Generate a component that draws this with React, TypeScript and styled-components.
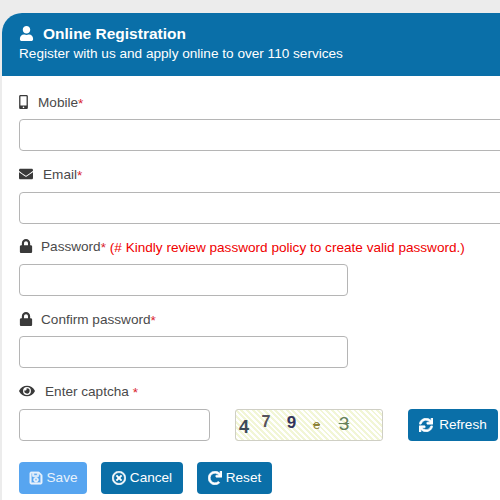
import styled, { createGlobalStyle } from 'styled-components';
import { ReactNode } from 'react';
import {
  FaUser,
  FaMobileAlt,
  FaEnvelope,
  FaLock,
  FaEye,
  FaRegSave,
  FaRegTimesCircle,
  FaRedo,
  FaSync,
} from 'react-icons/fa';

const GlobalStyle = createGlobalStyle`
  html, body {
    margin: 0;
    height: 500px;
    overflow: hidden;
    background: #ececec;
    font-family: "Liberation Sans", Arial, sans-serif;
  }
`;

const Page = styled.div`
  width: 500px;
  height: 500px;
  overflow: hidden;
  padding: 13px 0 0 2px;
  box-sizing: border-box;
`;
const Card = styled.div`
  width: 620px;
  height: 487px;
  background: #fff;
  border-radius: 20px 0 0 0;
  overflow: hidden;
`;
const Header = styled.div`
  background: #0a6fa8;
  color: #fff;
  height: 63px;
  box-sizing: border-box;
  padding: 11px 0 0 17px;
`;
const Title = styled.div`
  display: flex;
  align-items: center;
  gap: 9px;
  font-size: 15.5px;
  font-weight: 700;
  line-height: 19px;
  svg {
    width: 15px;
    height: 15px;
  }
`;
const Subtitle = styled.div`
  font-size: 13.6px;
  line-height: 19px;
  margin-top: 1px;
`;
const Form = styled.div`
  padding: 15.2px 0 0 17px;
`;
const Field = styled.div`
  margin-bottom: 12.4px;
`;
const Label = styled.div<{ $gap: number; $iconWidth: number }>`
  display: flex;
  align-items: center;
  gap: ${(p) => p.$gap}px;
  height: 20px;
  margin-bottom: 8px;
  font-size: 13.6px;
  color: #4a4a4a;
  span {
    position: relative;
    top: 1px;
  }
  svg {
    flex: none;
    color: #3a3a3a;
    width: ${(p) => p.$iconWidth}px;
    height: 14px;
    margin-top: 1px;
  }
`;
const Star = styled.span`
  color: #d9232e;
`;
const Note = styled.span`
  color: #f00000;
`;
const Input = styled.input<{ $width: number }>`
  display: block;
  width: ${(p) => p.$width}px;
  height: 32px;
  box-sizing: border-box;
  border: 1px solid #b5b5b5;
  border-radius: 4px;
  background: #fff;
  outline: none;
`;
const CaptchaRow = styled.div`
  display: flex;
  align-items: center;
`;
const CaptchaImage = styled.div`
  width: 148px;
  height: 32px;
  margin-left: 25px;
  box-sizing: border-box;
  border: 1px solid #cfcfc4;
  border-radius: 3px;
  padding-left: 1px;
  display: flex;
  align-items: center;
  background: repeating-linear-gradient(
    45deg,
    #f2f6d6,
    #f2f6d6 2px,
    #ffffff 2px,
    #ffffff 4px
  );
`;
const CaptchaChar = styled.span<{ $color: string; $width: number; $y: number; $size: number; $struck?: boolean }>`
  display: inline-block;
  width: ${(p) => p.$width}px;
  text-align: center;
  font-family: "Liberation Sans", sans-serif;
  font-size: ${(p) => p.$size}px;
  font-weight: ${(p) => (p.$struck ? 400 : 700)};
  text-decoration: ${(p) => (p.$struck ? 'line-through' : 'none')};
  color: ${(p) => p.$color};
  transform: translateY(${(p) => p.$y}px);
`;
const Button = styled.button<{ $light?: boolean; $width: number; $gap: number }>`
  display: inline-flex;
  align-items: center;
  justify-content: center;
  gap: ${(p) => p.$gap}px;
  width: ${(p) => p.$width}px;
  height: 32px;
  padding: 0;
  border: 0;
  border-radius: 4px;
  background: ${(p) => (p.$light ? '#57a5f0' : '#0a6fa8')};
  color: ${(p) => (p.$light ? '#e8f2fc' : '#fff')};
  font-family: inherit;
  font-size: 13.6px;
  svg {
    width: 14px;
    height: 14px;
    stroke: currentColor;
    stroke-width: 24;
  }
`;
const RefreshButton = styled(Button)`
  margin-left: 25px;
`;
const Actions = styled.div`
  display: flex;
  gap: 14px;
  margin-top: 21px;
`;

interface RowProps {
  icon: ReactNode;
  gap: number;
  iconWidth?: number;
  label: string;
  width: number;
  note?: string;
}

const Row = ({ icon, gap, iconWidth = 14, label, width, note }: RowProps) => (
  <Field>
    <Label $gap={gap} $iconWidth={iconWidth}>
      {icon}
      <span>
        {label}
        <Star>*</Star>
        {note && <Note> {note}</Note>}
      </span>
    </Label>
    <Input $width={width} />
  </Field>
);

const App = () => {
  return (
    <Page>
      <GlobalStyle />
      <Card>
        <Header>
          <Title>
            <FaUser />
            Online Registration
          </Title>
          <Subtitle>Register with us and apply online to over 110 services</Subtitle>
        </Header>
        <Form>
          <Row icon={<FaMobileAlt />} gap={10} iconWidth={9} label='Mobile' width={600} />
          <Row icon={<FaEnvelope />} gap={10} label='Email' width={600} />
          <Row
            icon={<FaLock />}
            gap={8}
            label='Password'
            width={329}
            note='(# Kindly review password policy to create valid password.)'
          />
          <Row icon={<FaLock />} gap={8} label='Confirm password' width={329} />
          <Label $gap={10} $iconWidth={16}>
            <FaEye />
            <span>
              Enter captcha <Star>*</Star>
            </span>
          </Label>
          <CaptchaRow>
            <Input $width={191} />
            <CaptchaImage>
              <CaptchaChar $color='#3c4a58' $width={14} $y={3} $size={18}>4</CaptchaChar>
              <CaptchaChar $color='#55525c' $width={30} $y={-3} $size={16}>7</CaptchaChar>
              <CaptchaChar $color='#35355c' $width={21} $y={-2} $size={17}>9</CaptchaChar>
              <CaptchaChar $color='#8f8238' $width={29} $y={0} $size={13} $struck>e</CaptchaChar>
              <CaptchaChar $color='#66805a' $width={26} $y={-1} $size={19} $struck>3</CaptchaChar>
            </CaptchaImage>
            <RefreshButton $width={90} $gap={6}>
              <FaSync />
              Refresh
            </RefreshButton>
          </CaptchaRow>
          <Actions>
            <Button $light $width={68} $gap={4}>
              <FaRegSave />
              Save
            </Button>
            <Button $width={82} $gap={4}>
              <FaRegTimesCircle />
              Cancel
            </Button>
            <Button $width={75} $gap={4}>
              <FaRedo />
              Reset
            </Button>
          </Actions>
        </Form>
      </Card>
    </Page>
  );
};

export default App;
